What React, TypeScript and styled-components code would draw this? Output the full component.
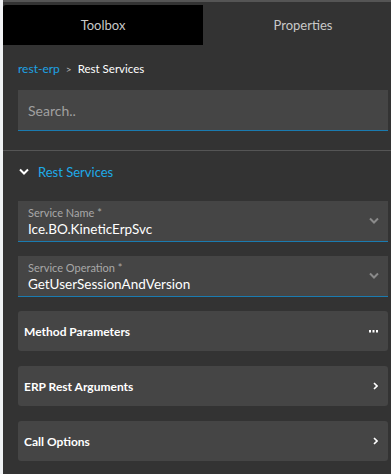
import React from "react";
import styled, { createGlobalStyle } from "styled-components";

const Global = createGlobalStyle`
  html, body { margin: 0; padding: 0; background: #f0f2f4; }
  body { font-family: Lato, "Open Sans", sans-serif; }
`;

const Frame = styled.div`
  margin-left: 3px;
  width: 388px;
  height: 474px;
  background: #333333;
  border-top: 2px solid #555555;
  box-sizing: border-box;
  overflow: hidden;
`;

const Tabs = styled.div`
  display: flex;
  margin-top: 3px;
  height: 40px;
`;

const Tab = styled.div<{ $active?: boolean }>`
  flex: 0 0 200px;
  display: flex;
  align-items: center;
  justify-content: center;
  font-size: 13px;
  color: #c8c8c8;
  background: ${(p) => (p.$active ? "#000000" : "transparent")};
  border-top-left-radius: ${(p) => (p.$active ? "3px" : "0")};
`;

const Crumbs = styled.div`
  display: flex;
  align-items: center;
  gap: 6px;
  padding: 16px 15px 0;
  height: 15px;
  font-size: 12px;
`;

const CrumbLink = styled.span`
  color: #1ea2e4;
`;

const CrumbSep = styled.span`
  color: #bbbbbb;
  font-size: 10px;
`;

const CrumbCurrent = styled.span`
  color: #ffffff;
  font-size: 11.5px;
`;

const Search = styled.div`
  margin: 14px 0 0 15px;
  width: 370px;
  height: 41px;
  box-sizing: border-box;
  background: #454545;
  border-bottom: 1px solid #1a7bb0;
  display: flex;
  align-items: center;
  padding: 0 10px;
  font-size: 14px;
  color: #a0a0a0;
`;

const Divider = styled.div`
  margin-top: 19px;
  height: 1px;
  background: #555555;
`;

const Section = styled.div`
  display: flex;
  align-items: center;
  gap: 9px;
  padding: 0 16px;
  height: 41px;
  font-size: 13px;
  color: #1eaae8;
`;

const Body = styled.div`
  display: flex;
  flex-direction: column;
  gap: 14px;
  padding: 9px 0 0 15px;
  width: 385px;
  box-sizing: border-box;
`;

const Field = styled.div`
  height: 41px;
  box-sizing: border-box;
  background: #454545;
  border-bottom: 1px solid #1a7bb0;
  padding: 5px 10px 0;
  position: relative;
`;

const Label = styled.div`
  font-size: 11px;
  color: #a8a8a8;
  line-height: 14px;
`;

const Value = styled.div`
  font-size: 13.5px;
  color: #ffffff;
  line-height: 17px;
  margin-top: 1px;
`;

const FieldIcon = styled.span`
  position: absolute;
  right: 9px;
  top: 16px;
  display: flex;
`;

const Panel = styled.div`
  height: 40px;
  border-radius: 3px;
  background: #454545;
  display: flex;
  align-items: center;
  justify-content: space-between;
  padding: 0 10px 0 6px;
  font-size: 12px;
  font-weight: 700;
  color: #ffffff;
  & + & {
    margin-top: 1px;
  }
`;

const Down = ({ color, size = 10 }: { color: string; size?: number }) => (
  <svg width={size} height={size * 0.7} viewBox="0 0 10 7">
    <path d="M1 1.5 L5 5.5 L9 1.5" fill="none" stroke={color} strokeWidth="2" />
  </svg>
);

const Right = () => (
  <svg width="5" height="8" viewBox="0 0 5 8">
    <path d="M1 1 L4 4 L1 7" fill="none" stroke="#ffffff" strokeWidth="1.6" />
  </svg>
);

const Dots = () => (
  <svg width="9" height="3" viewBox="0 0 9 3">
    <rect x="0" y="0" width="2" height="2.5" fill="#ffffff" />
    <rect x="3.5" y="0" width="2" height="2.5" fill="#ffffff" />
    <rect x="7" y="0" width="2" height="2.5" fill="#ffffff" />
  </svg>
);

const fields = [
  { label: "Service Name *", value: "Ice.BO.KineticErpSvc" },
  { label: "Service Operation *", value: "GetUserSessionAndVersion" },
];

const panels = [
  { title: "Method Parameters", icon: <Dots /> },
  { title: "ERP Rest Arguments", icon: <Right /> },
  { title: "Call Options", icon: <Right /> },
];

export default function App() {
  return (
    <>
      <Global />
      <Frame>
        <Tabs>
          <Tab $active>Toolbox</Tab>
          <Tab>Properties</Tab>
        </Tabs>
        <Crumbs>
          <CrumbLink>rest-erp</CrumbLink>
          <CrumbSep>&gt;</CrumbSep>
          <CrumbCurrent>Rest Services</CrumbCurrent>
        </Crumbs>
        <Search>Search..</Search>
        <Divider />
        <Section>
          <Down color="#ffffff" size={10} />
          Rest Services
        </Section>
        <Body>
          {fields.map((f) => (
            <Field key={f.label}>
              <Label>{f.label}</Label>
              <Value>{f.value}</Value>
              <FieldIcon>
                <Down color="#8a8a8a" size={10} />
              </FieldIcon>
            </Field>
          ))}
          {panels.map((p) => (
            <Panel key={p.title}>
              {p.title}
              {p.icon}
            </Panel>
          ))}
        </Body>
      </Frame>
    </>
  );
}
